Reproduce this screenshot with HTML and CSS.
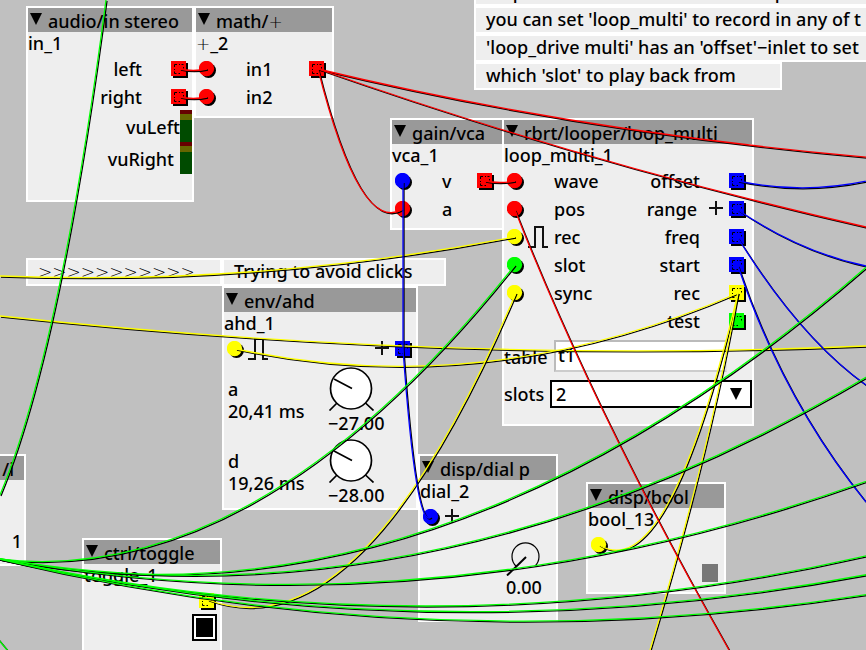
FILE: index.html
```html
<!DOCTYPE html>
<html lang="en">
<head>
<meta charset="utf-8">
<title>Looper patch</title>
<link rel="stylesheet" href="styles.css">
</head>
<body>
<svg class="defs" aria-hidden="true">
  <symbol id="inlet" viewBox="0 0 18 18">
    <circle cx="9.5" cy="9.5" r="7.5" fill="#000"/>
    <circle cx="7.5" cy="7.5" r="7.7" fill="currentColor"/>
  </symbol>
  <symbol id="outlet" viewBox="0 0 18 18">
    <path d="M2 2h15v15H2z" fill="#000"/>
    <path d="M0 0h15v15H0z" fill="currentColor"/>
    <path d="M3.5 6V3.5H6M8 3.5h1M10.500 3.500H12.500M3.500 8V9M3.500 10.500V12.500H5.500M7.500 12.500H9M12.500 6V7.500" fill="none" stroke="#000"/>
  </symbol>
  <symbol id="fold" viewBox="0 0 12 12"><path d="M0 0h12L6 12z"/></symbol>
  <symbol id="plus" viewBox="0 0 14 14"><path d="M0 7h14M7 0v14" fill="none" stroke="#111" stroke-width="2"/></symbol>
  <symbol id="pulse" viewBox="0 0 20 22"><path d="M0 21h7V1h8v20H20" fill="none" stroke="#111" stroke-width="2"/></symbol>
  <symbol id="knob" viewBox="0 0 46 44">
    <circle cx="23" cy="21.500" r="20.500" fill="#fff" stroke="#000" stroke-width="1.700"/>
    <path d="M24 21.500 6 12M9 36l-7.500 7.500M37.500 36l8 7.500" fill="none" stroke="#000" stroke-width="1.700"/>
  </symbol>
  <symbol id="dial" viewBox="0 0 34 34">
    <path d="M10.200 24.200A13.500 13.500 0 1 1 28.800 24.200" fill="none" stroke="#000" stroke-width="1.200"/>
    <path d="M20 15 1 33.500" fill="none" stroke="#000" stroke-width="2"/>
  </symbol>
</svg>

<main class="patch">
  <p class="note note-top"><span>loop</span><span>p</span></p>
  <p class="note note-record">you can set 'loop_multi' to record in any of t</p>
  <p class="note note-drive">'loop_drive multi' has an 'offset'−inlet to set</p>
  <p class="note note-slot">which 'slot' to play back from</p>
  <p class="note note-arrows">&gt;&gt;&gt;&gt;&gt;&gt;&gt;&gt;&gt;&gt;&gt;</p>
  <p class="note note-clicks">Trying to avoid clicks</p>

  <section class="node node-in">
    <header><button aria-label="Fold"><svg><use href="#fold"/></svg></button><h2>audio/in stereo</h2></header>
    <p class="name">in_1</p>
    <div class="row"><span class="out-label">left</span><svg class="port red"><use href="#outlet"/></svg></div>
    <div class="row"><span class="out-label">right</span><svg class="port red"><use href="#outlet"/></svg></div>
    <div class="vu"><span>vuLeft</span><i></i></div>
    <div class="vu vu-right"><span>vuRight</span><i></i></div>
  </section>

  <section class="node wide-out node-math">
    <header><button aria-label="Fold"><svg><use href="#fold"/></svg></button><h2>math/<span class="thin">+</span></h2></header>
    <p class="name"><span class="thin">+</span>_2</p>
    <div class="row"><svg class="port red"><use href="#inlet"/></svg><span class="in-label">in1</span><svg class="port red"><use href="#outlet"/></svg></div>
    <div class="row"><svg class="port red"><use href="#inlet"/></svg><span class="in-label">in2</span></div>
  </section>

  <section class="node wide-out node-vca">
    <header><button aria-label="Fold"><svg><use href="#fold"/></svg></button><h2>gain/vca</h2></header>
    <p class="name">vca_1</p>
    <div class="row"><svg class="port blue"><use href="#inlet"/></svg><span class="in-label">v</span><svg class="port red"><use href="#outlet"/></svg></div>
    <div class="row"><svg class="port red"><use href="#inlet"/></svg><span class="in-label">a</span></div>
  </section>

  <section class="node wide-out node-loop">
    <header><button aria-label="Fold"><svg><use href="#fold"/></svg></button><h2>rbrt/looper/loop_multi</h2></header>
    <p class="name">loop_multi_1</p>
    <div class="row"><svg class="port red"><use href="#inlet"/></svg><span class="in-label">wave</span><span class="out-label">offset</span><svg class="port blue"><use href="#outlet"/></svg></div>
    <div class="row"><svg class="port red"><use href="#inlet"/></svg><span class="in-label">pos</span><span class="out-label with-mark">range</span><svg class="plus"><use href="#plus"/></svg><svg class="port blue"><use href="#outlet"/></svg></div>
    <div class="row"><svg class="port yellow"><use href="#inlet"/></svg><svg class="pulse"><use href="#pulse"/></svg><span class="in-label with-mark">rec</span><span class="out-label">freq</span><svg class="port blue"><use href="#outlet"/></svg></div>
    <div class="row"><svg class="port green"><use href="#inlet"/></svg><span class="in-label">slot</span><span class="out-label">start</span><svg class="port blue"><use href="#outlet"/></svg></div>
    <div class="row"><svg class="port yellow"><use href="#inlet"/></svg><span class="in-label">sync</span><span class="out-label">rec</span><svg class="port yellow"><use href="#outlet"/></svg></div>
    <div class="row"><span class="out-label">test</span><svg class="port green"><use href="#outlet"/></svg></div>
    <div class="field field-table"><label for="table">table</label><input id="table" type="text" value="t1"></div>
    <div class="field field-slots"><label for="slots">slots</label><div class="select"><select id="slots"><option>2</option></select><svg><use href="#fold"/></svg></div></div>
  </section>

  <section class="node node-ahd">
    <header><button aria-label="Fold"><svg><use href="#fold"/></svg></button><h2>env/ahd</h2></header>
    <p class="name">ahd_1</p>
    <div class="row"><svg class="port yellow"><use href="#inlet"/></svg><svg class="pulse"><use href="#pulse"/></svg><svg class="plus push"><use href="#plus"/></svg><svg class="port blue"><use href="#outlet"/></svg></div>
    <div class="param"><div class="reading"><span>a</span><span>20,41 ms</span></div><div class="knob"><svg><use href="#knob"/></svg><output>−27.00</output></div></div>
    <div class="param"><div class="reading"><span>d</span><span>19,26 ms</span></div><div class="knob"><svg><use href="#knob"/></svg><output>−28.00</output></div></div>
  </section>

  <section class="node node-int">
    <header><h2>/i</h2></header>
    <output>1</output>
  </section>

  <section class="node node-toggle">
    <header><button aria-label="Fold"><svg><use href="#fold"/></svg></button><h2>ctrl/toggle</h2></header>
    <p class="name">toggle_1</p>
    <div class="row"><svg class="port yellow"><use href="#outlet"/></svg></div>
    <input class="toggle" type="checkbox" aria-label="toggle_1" checked>
  </section>

  <section class="node node-dial">
    <header><button aria-label="Fold"><svg><use href="#fold"/></svg></button><h2>disp/dial p</h2></header>
    <p class="name">dial_2</p>
    <div class="row"><svg class="port blue"><use href="#inlet"/></svg><svg class="plus"><use href="#plus"/></svg></div>
    <div class="dial"><svg><use href="#dial"/></svg><output>0.00</output></div>
  </section>

  <section class="node node-bool">
    <header><button aria-label="Fold"><svg><use href="#fold"/></svg></button><h2>disp/bool</h2></header>
    <p class="name">bool_13</p>
    <div class="row"><svg class="port yellow"><use href="#inlet"/></svg></div>
    <i class="lamp"></i>
  </section>

  <svg class="wires" aria-hidden="true">
    <g class="yellow">
      <path d="M0 276Q261 286 515 237"/>
      <path d="M0 316Q450 364 866 346"/>
      <path d="M236 349Q487 402 738 293"/>
      <path d="M738 293Q668 587 599 545"/>
      <path d="M738 293Q710 449 650 650"/>
      <path d="M516 293Q362 656 208 600"/>
    </g>
    <g class="red">
      <path d="M180 69Q193 72 207 69"/>
      <path d="M180 97Q193 100 207 97"/>
      <path d="M485 181Q500 184 515 181"/>
      <path d="M318 69Q360 236 403 209"/>
      <path d="M318 69Q592 135 900 160"/>
      <path d="M318 69Q592 165 866 227"/>
      <path d="M515 210Q595 414 729 650"/>
    </g>
    <g class="blue">
      <path d="M403 182L403 349"/>
      <path d="M403 349Q416 531 431 517"/>
      <path d="M738 181Q808 196 880 178"/>
      <path d="M738 210Q800 252 866 266"/>
      <path d="M738 238Q800 338 866 385"/>
      <path d="M738 266Q783 400 866 502"/>
    </g>
    <g class="green">
      <path d="M106 0Q60 351 0 495"/>
      <path d="M-10 558Q253 594 515 265"/>
      <path d="M-10 557Q430 648 870 264"/>
      <path d="M-10 557Q430 636 870 375"/>
      <path d="M-10 557Q430 638 870 480"/>
      <path d="M-10 557Q430 656 870 555"/>
      <path d="M-10 557Q430 657 870 574"/>
      <path d="M-10 557Q430 663 870 594"/>
      <path d="M-2 639L8 651"/>
    </g>
  </svg>
</main>
</body>
</html>
```
FILE: styles.css
```css
* { box-sizing: border-box; }

body {
  margin: 0;
  background: #c0c0c0;
  color: #000;
  font: 500 18px/22px "Noto Sans", "Open Sans", sans-serif;
}

h2, p { margin: 0; font-size: inherit; font-weight: inherit; }

.defs { position: absolute; width: 0; height: 0; }

.patch {
  position: relative;
  min-height: 100vh;
  overflow: hidden;
}

.thin { font-family: "DejaVu Sans", sans-serif; font-size: 17px; font-weight: 200; }

.red { color: #f00; }
.blue { color: #00f; }
.yellow { color: #ff0; }
.green { color: #0f0; }

/* Comments */
.note {
  position: absolute;
  height: 28px;
  padding: 0 10px;
  border: 2px solid #fff;
  background: #eee;
  white-space: nowrap;
}
.note-top { left: 474px; top: -22px; width: 420px; display: flex; justify-content: space-between; padding-right: 106px; line-height: 24px; }
.note-record { left: 474px; top: 6px; width: 420px; }
.note-drive { left: 474px; top: 34px; width: 420px; }
.note-slot { left: 474px; top: 62px; width: 308px; }
.note-arrows { left: 26px; top: 258px; width: 196px; font-family: "DejaVu Sans", sans-serif; font-size: 17px; font-weight: 200; line-height: 24px; }
.note-clicks { left: 222px; top: 258px; width: 224px; }

/* Nodes */
.node {
  position: absolute;
  border: 2px solid #fff;
  background: #eee;
  white-space: nowrap;
}
.node-in { left: 26px; top: 6px; width: 168px; padding-bottom: 26px; }
.node-math { left: 194px; top: 6px; width: 140px; padding-bottom: 6px; }
.node-vca { left: 390px; top: 118px; width: 114px; padding-bottom: 6px; }
.node-loop { left: 502px; top: 118px; width: 252px; padding-bottom: 16px; }
.node-ahd { left: 222px; top: 286px; width: 196px; padding-bottom: 2px; }
.node-int { left: -114px; top: 454px; width: 140px; }
.node-toggle { left: 82px; top: 538px; width: 140px; padding-bottom: 16px; }
.node-dial { left: 418px; top: 454px; width: 140px; padding-bottom: 22px; }
.node-bool { left: 586px; top: 482px; width: 140px; padding-bottom: 10px; }

.node header {
  display: flex;
  height: 24px;
  padding-left: 2px;
  background: #999;
}
.node header button {
  width: 18px;
  padding: 0 0 2px;
  border: 0;
  background: none;
  text-align: left;
}
.node header svg { display: block; width: 12px; height: 12px; }
.node h2 { line-height: 26px; }
.name { height: 22px; line-height: 22px; }

.row {
  display: flex;
  height: 28px;
  padding: 7px 3px 0;
  line-height: 16px;
}
.wide-out .row { padding-right: 5px; }
.node-vca .row { padding-right: 7px; }
.port { flex: none; width: 18px; height: 18px; }
.row > .port:last-child { margin-left: auto; }
.row > .port:first-child { margin-left: 0; }
.row > .out-label + .port:last-child, .row > .plus + .port:last-child { margin-left: 0; }
.in-label { margin-left: 29px; }
.in-label.with-mark { margin-left: 6px; }
.out-label { margin-left: auto; padding-right: 29px; }
.out-label.with-mark { padding-right: 12px; }
.plus { width: 14px; height: 14px; margin-right: 6px; }
.plus.push { margin-left: auto; }
.pulse { width: 20px; height: 22px; margin: -3px 0 0 3px; }
.node-dial .plus { margin-left: 4px; }
.node-toggle .row > .port, .node-in .row > .port { margin-left: auto; }

.vu { display: flex; justify-content: flex-end; height: 32px; line-height: 34px; }
.vu i {
  width: 12px;
  background: linear-gradient(#600 4px, #660 4px 10px, #004b00 10px);
}
.vu-right span { padding-right: 6px; }

.field { display: flex; align-items: center; }
.field label { flex: none; }
.field-table { height: 32px; margin-top: 6px; padding-right: 25px; }
.field-table label { width: 50px; padding-top: 2px; }
.field-table input {
  width: 100%;
  height: 32px;
  padding: 0 2px 2px;
  border: 2px solid #bbb;
  border-color: #bbb #e0e0e0 #ccc #bbb;
  background: #fff;
  font: inherit;
}
.field-slots { height: 28px; margin-top: 8px; }
.field-slots label { width: 46px; }
.select { flex: 1; display: grid; align-items: center; }
.select > * { grid-area: 1 / 1; }
.select select {
  height: 28px;
  padding: 0 4px;
  border: 2px solid #000;
  border-radius: 0;
  background: #fff;
  appearance: none;
  color: #000;
  font: inherit;
}
.select svg { justify-self: end; width: 12px; height: 12px; margin-right: 10px; pointer-events: none; }

.param { display: flex; justify-content: space-between; height: 72px; padding: 5px 30px 0 4px; }
.reading { display: flex; flex-direction: column; padding-top: 11px; line-height: 22px; }
.knob { width: 58px; }
.knob svg { display: block; width: 46px; height: 44px; }
.knob output { display: block; overflow: hidden; line-height: 24px; }

.node-int h2 { width: 124px; text-align: right; }
.node-int output { display: block; padding: 50px 2px 12px; text-align: right; }

.toggle {
  display: block;
  width: 25px;
  height: 27px;
  margin: 0 3px 0 auto;
  border: 2px solid #000;
  background: #fff;
  appearance: none;
}
.toggle:checked { background: #000; box-shadow: inset 0 0 0 2px #fff; }

.dial { margin-left: 86px; padding-top: 12px; }
.dial svg { display: block; width: 34px; height: 34px; }

.lamp { display: block; width: 16px; height: 18px; margin: 6px 6px 0 auto; background: #777; }

/* Wires lie over every node */
.wires {
  position: absolute;
  inset: 0;
  width: 100%;
  height: 100%;
  pointer-events: none;
}
.wires path {
  fill: none;
  stroke: currentColor;
  stroke-width: 1.3;
  filter: drop-shadow(1px 1px 0 #000);
}
```
